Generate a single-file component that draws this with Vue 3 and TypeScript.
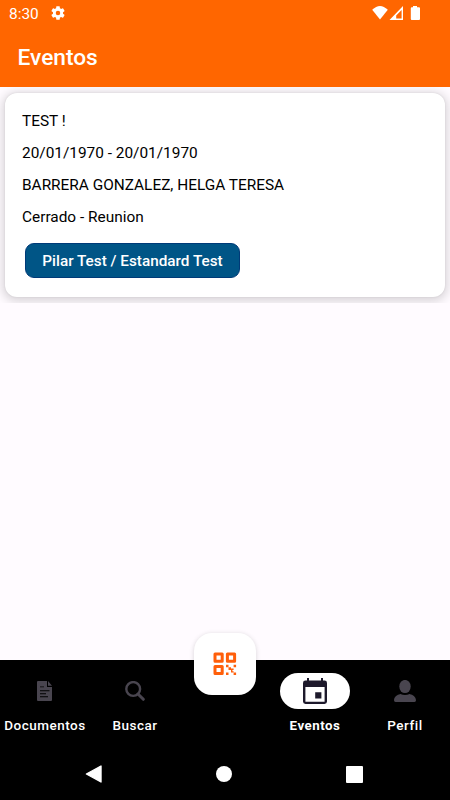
<script setup lang="ts">
interface EventItem {
  title: string
  dates: string
  person: string
  status: string
  tag: string
}

const events: EventItem[] = [
  {
    title: 'TEST !',
    dates: '20/01/1970 - 20/01/1970',
    person: 'BARRERA GONZALEZ, HELGA TERESA',
    status: 'Cerrado - Reunion',
    tag: 'Pilar Test / Estandard Test',
  },
]
</script>

<template>
  <div class="screen">
    <header class="top">
      <div class="status">
        <span class="clock">8:30</span>
        <svg class="gear" viewBox="2 2 20 20" width="14" height="14">
          <path fill="#fff" d="M19.14 12.94c.04-.3.06-.61.06-.94 0-.32-.02-.64-.07-.94l2.03-1.58a.49.49 0 0 0 .12-.61l-1.92-3.32a.49.49 0 0 0-.59-.22l-2.39.96c-.5-.38-1.03-.7-1.62-.94l-.36-2.54a.48.48 0 0 0-.48-.41h-3.84c-.24 0-.43.17-.47.41l-.36 2.54c-.59.24-1.13.57-1.62.94l-2.39-.96a.49.49 0 0 0-.59.22L2.74 8.87c-.12.21-.08.47.12.61l2.03 1.58c-.05.3-.09.63-.09.94s.02.64.07.94l-2.03 1.58a.49.49 0 0 0-.12.61l1.92 3.32c.12.22.37.29.59.22l2.39-.96c.5.38 1.03.7 1.62.94l.36 2.54c.05.24.24.41.48.41h3.84c.24 0 .44-.17.47-.41l.36-2.54c.59-.24 1.13-.56 1.62-.94l2.39.96c.22.08.47 0 .59-.22l1.92-3.32a.49.49 0 0 0-.12-.61zM12 15.2a3.2 3.2 0 1 1 0-6.4 3.2 3.2 0 0 1 0 6.4z" />
        </svg>
        <svg class="signals" viewBox="0 0 50 16" width="50" height="16">
          <path fill="#fff" d="M.2 3.8Q8 -3.8 15.8 3.8L8 13.4Z" />
          <path fill="#fff" fill-rule="evenodd" d="M31 0V14H17.5ZM29.6 4L24.2 9.5V12.5H29.6Z" />
          <path fill="#fff" d="M41 0H45V1.2H47Q48 1.2 48 2.2V13Q48 14 47 14H39.8Q38.8 14 38.8 13V2.2Q38.8 1.2 39.8 1.2H41Z" />
        </svg>
      </div>
      <h1>Eventos</h1>
    </header>

    <main class="content">
      <section class="list">
        <article v-for="event in events" :key="event.title" class="card">
          <p>{{ event.title }}</p>
          <p>{{ event.dates }}</p>
          <p>{{ event.person }}</p>
          <p>{{ event.status }}</p>
          <button class="tag" type="button">{{ event.tag }}</button>
        </article>
      </section>
    </main>

    <nav class="tabs">
      <div class="tab">
        <span class="pill">
          <svg viewBox="0 0 16 20" width="16" height="20">
            <path fill="#49454f" fill-rule="evenodd" d="M1 0H10V6H15V19Q15 20 14 20H1Q0 20 0 19V1Q0 0 1 0ZM3 5.5H7V6.3H3ZM3 9.2H12.5V10.2H3ZM3 12.2H9V13.2H3ZM3 15.3H11V16.3H3Z" />
            <path fill="#49454f" d="M11 0L15 4.8H11Z" />
          </svg>
        </span>
        <span class="label">Documentos</span>
      </div>
      <div class="tab">
        <span class="pill">
          <svg viewBox="0 0 20 20" width="20" height="20">
            <circle cx="8.2" cy="8" r="6.9" fill="none" stroke="#49454f" stroke-width="2.4" />
            <path d="M13 13L18.3 18.3" stroke="#49454f" stroke-width="3" stroke-linecap="round" />
          </svg>
        </span>
        <span class="label">Buscar</span>
      </div>
      <div class="tab">
        <button class="scan" type="button" aria-label="QR">
          <svg viewBox="0 0 24 24" width="24" height="24">
            <g fill="none" stroke="#ff5f0a" stroke-width="3" stroke-linejoin="round">
              <path d="M2 2H9.2V9.2H2ZM14.4 2H21.6V9.2H14.4ZM2 14.4H9.2V21.6H2Z" />
            </g>
            <path fill="#ff5f0a" d="M13 12.8H15.5V15.3H13ZM20.6 12.8H23.1V15.3H20.6ZM15.5 15.3H18V16.6H20.6V18H19.4V19.2H20.6V20.6H23.1V23.1H20.6V20.6H18V18H15.5ZM13 20.6H15.5V23.1H13Z" />
          </svg>
        </button>
      </div>
      <div class="tab">
        <span class="pill active">
          <svg viewBox="0 0 24 27" width="24" height="27">
            <path fill="#1d192b" fill-rule="evenodd" d="M4 0H6V2.6H18V0H20V2.6H21.5Q24 2.6 24 5V23.6Q24 26 21.5 26H2.5Q0 26 0 23.6V5Q0 2.6 2.5 2.6H4ZM2.4 9V23.8H21.6V9ZM12.2 14.2H18.4V20.5H12.2Z" />
          </svg>
        </span>
        <span class="label selected">Eventos</span>
      </div>
      <div class="tab">
        <span class="pill">
          <svg viewBox="0 0 22 22" width="22" height="22">
            <ellipse cx="11" cy="6.5" rx="5.7" ry="6.6" fill="#49454f" />
            <path fill="#49454f" d="M0 20.3C.3 16.5 3 15 6.3 14Q11 16.2 15.7 14C19 15 21.7 16.5 22 20.3Q22 22 20.5 22H1.5Q0 22 0 20.3Z" />
          </svg>
        </span>
        <span class="label">Perfil</span>
      </div>
    </nav>

    <footer class="system">
      <svg viewBox="0 0 17 18" width="17" height="18">
        <path d="M1.4 9L16 1V17Z" fill="#fff" stroke="#fff" stroke-width="1.4" stroke-linejoin="round" />
      </svg>
      <svg viewBox="0 0 16 16" width="16" height="16"><circle cx="8" cy="8" r="8" fill="#fff" /></svg>
      <svg viewBox="0 0 17 17" width="17" height="17"><rect width="17" height="17" rx="1" fill="#fff" /></svg>
    </footer>
  </div>
</template>

<style>
body {
  margin: 0;
}
</style>

<style scoped>
.screen {
  display: flex;
  flex-direction: column;
  width: 450px;
  height: 800px;
  overflow: hidden;
  background: #fffbff;
  font-family: Roboto, sans-serif;
}
.top {
  height: 87px;
  background: #ff6600;
  color: #fff;
}
.status {
  display: flex;
  align-items: center;
  height: 28px;
  padding: 0 28px 0 9px;
}
.clock {
  width: 42px;
  padding-top: 1px;
  font-size: 15.4px;
  line-height: 27px;
}
.gear {
  margin-top: -2px;
}
.signals {
  margin-left: auto;
}
h1 {
  margin: 15px 0 0 17.5px;
  font-size: 22.7px;
  font-weight: 500;
  line-height: 30px;
}
.content {
  flex: 1;
}
.list {
  padding: 6px 5px 6px;
  overflow: hidden;
}
.card {
  box-sizing: border-box;
  height: 204px;
  padding: 12px 17px;
  border-radius: 12px;
  background: #fff;
  box-shadow: 0 0 2px rgb(0 0 0 / 10%), 0 2px 10px 3px rgb(0 0 0 / 14%);
}
p {
  margin: 0;
  color: #000;
  font-size: 15.4px;
  line-height: 32px;
}
.tag {
  display: block;
  width: 215px;
  height: 35px;
  margin: 10px 0 0 3px;
  padding: 0;
  border: 1px solid #003a78;
  border-radius: 9px;
  background: #005586;
  color: #fff;
  font: 500 15.3px/32px Roboto, sans-serif;
}
.tabs {
  display: grid;
  grid-template-columns: repeat(5, 90px);
  height: 88px;
  background: #000;
}
.tab {
  display: flex;
  flex-direction: column;
  align-items: center;
  padding-top: 13px;
}
.pill {
  display: flex;
  align-items: center;
  justify-content: center;
  width: 70px;
  height: 36px;
  border-radius: 18px;
}
.active {
  background: #fff;
}
.label {
  margin-top: 7px;
  color: #fff;
  font-size: 13.5px;
  font-weight: 500;
  letter-spacing: 0.5px;
  line-height: 19px;
}
.selected {
  font-size: 13.3px;
  font-weight: 700;
}
.scan {
  display: flex;
  flex: none;
  align-items: center;
  justify-content: center;
  width: 62px;
  height: 62px;
  margin-top: -40px;
  padding: 0;
  border: 0;
  border-radius: 18px;
  background: #fff;
  box-shadow: 0 1px 5px rgb(0 0 0 / 16%);
}
.system {
  display: flex;
  align-items: center;
  justify-content: space-between;
  height: 52px;
  padding: 0 87px 0 85.4px;
  background: #000;
}
</style>
